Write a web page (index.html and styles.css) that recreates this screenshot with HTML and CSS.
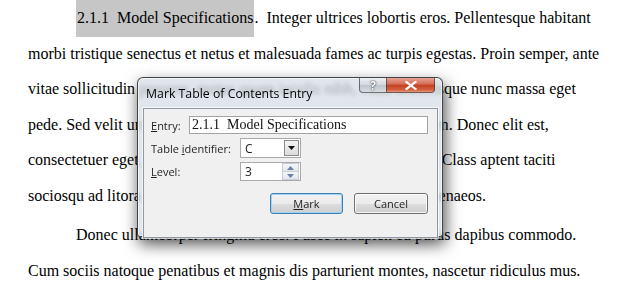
FILE: index.html
```html
<!DOCTYPE html>
<html lang="en">
<head>
  <meta charset="UTF-8">
  <title>Mark Table of Contents Entry</title>
  <link rel="stylesheet" href="styles.css">
</head>
<body>
  <div class="page">
    <p class="para indent"><span class="toc-mark">2.1.1&nbsp; Model Specifications</span>.&nbsp; Integer ultrices lobortis eros. Pellentesque habitant<br>
    morbi tristique senectus et netus et malesuada fames ac turpis egestas. Proin semper, ante<br>
    vitae sollicitudin posuere, metus quam iaculis nibh, vitae scelerisque nunc massa eget<br>
    pede. Sed velit urna, interdum vel, ultricies vel, faucibus at, quam. Donec elit est,<br>
    consectetuer eget, consequat quis, tempus quis, wisi. In in nunc. Class aptent taciti<br>
    sociosqu ad litora torquent per conubia nostra, per inceptos hymenaeos.</p>
    <p class="para indent second">Donec ullamcorper fringilla eros. Fusce in sapien eu purus dapibus commodo.<br>
    Cum sociis natoque penatibus et magnis dis parturient montes, nascetur ridiculus mus.</p>
  </div>

  <!-- Mark Table of Contents Entry dialog -->
  <div class="dialog">
    <div class="titlebar">
      <span class="title">Mark Table of Contents Entry</span>
      <div class="caption-buttons">
        <div class="cap-btn help">?</div>
        <div class="cap-btn close">
          <svg width="12" height="9" viewBox="0 0 12 9"><path d="M1.5 1 L10.5 8 M10.5 1 L1.5 8" stroke="#fff" stroke-width="2.2" stroke-linecap="square"/></svg>
        </div>
      </div>
    </div>

    <div class="panel">
      <div class="row">
        <label class="label entry-label"><u>E</u>ntry:</label>
        <div class="textbox">2.1.1&nbsp; Model Specifications</div>
      </div>
      <div class="row">
        <label class="label field-label">Table <u>i</u>dentifier:</label>
        <div class="combo">
          <span class="value">C</span>
          <span class="drop-btn">
            <svg width="7" height="4" viewBox="0 0 7 4"><path d="M0 0 H7 L3.5 4 Z" fill="#111"/></svg>
          </span>
        </div>
      </div>
      <div class="row">
        <label class="label field-label"><u>L</u>evel:</label>
        <div class="combo spin">
          <span class="value">3</span>
          <span class="spin-btns">
            <span class="spin-btn"><svg width="7" height="4" viewBox="0 0 7 4"><path d="M0 4 H7 L3.5 0 Z" fill="#6b7fa8"/></svg></span>
            <span class="spin-btn"><svg width="7" height="4" viewBox="0 0 7 4"><path d="M0 0 H7 L3.5 4 Z" fill="#6b7fa8"/></svg></span>
          </span>
        </div>
      </div>
      <div class="buttons">
        <button class="btn default"><u>M</u>ark</button>
        <button class="btn">Cancel</button>
      </div>
    </div>
  </div>
</body>
</html>
```

FILE: styles.css
```css
body {
  margin: 0;
  background-color: #fff;
  color: #000;
  font-family: 'Liberation Serif', 'Times New Roman', serif;
  overflow: hidden;
}

.page {
  padding: 0 0 0 28px;
}

.para {
  margin: 0;
  font-size: 16px;
  line-height: 35.5px;
}

.indent {
  text-indent: 48px;
}

.second {
  margin-top: 4px;
}

.toc-mark {
  background-color: #c6c6c6;
  padding: 12px 1px 11px 1px;
}

/* dialog */
.dialog {
  position: absolute;
  left: 137px;
  top: 77px;
  width: 304px;
  height: 158px;
  border: 1px solid rgba(40, 40, 40, 0.85);
  border-radius: 6px 6px 3px 3px;
  background-color: rgba(214, 222, 230, 0.76);
  -webkit-backdrop-filter: blur(2px);
  backdrop-filter: blur(2px);
  box-shadow: 2px 7px 16px rgba(0, 0, 0, 0.7), inset 0 0 0 1px rgba(255, 255, 255, 0.6);
  font-family: 'Open Sans', 'Noto Sans', sans-serif;
  font-size: 11px;
  color: #1e1e1e;
}

.titlebar {
  position: relative;
  height: 30px;
}

.title {
  position: absolute;
  left: 8px;
  top: 7px;
  font-size: 12.3px;
  color: #000;
}

.caption-buttons {
  position: absolute;
  top: 0;
  right: 7px;
  display: flex;
}

.cap-btn {
  height: 14px;
  display: flex;
  align-items: center;
  justify-content: center;
  border: 1px solid rgba(60, 60, 60, 0.7);
  border-top: none;
}

.help {
  width: 26px;
  border-right: none;
  border-radius: 0 0 0 4px;
  background: linear-gradient(#eef1f4, #d3d8de 50%, #bfc5cc 51%, #d8dde2);
  color: #fff;
  font-weight: bold;
  font-size: 12px;
  text-shadow: 0 0 2px #333, 0 0 1px #333;
}

.close {
  width: 47px;
  border-radius: 0 0 4px 0;
  background: linear-gradient(#e8a393, #d46b55 45%, #c2401f 50%, #d4603f 85%, #e89a7a);
}

.panel {
  margin: 0 4px 0 5px;
  height: 121px;
  border: 1px solid #8e98a3;
  background-color: #f0f0f0;
  box-shadow: 0 0 0 1px rgba(255, 255, 255, 0.7);
  padding: 7px 9px 0 7px;
}

.row {
  display: flex;
  align-items: center;
  margin-bottom: 4px;
}

.label {
  flex: none;
}

.entry-label {
  width: 38px;
}

.field-label {
  width: 89px;
}

.textbox {
  flex: 1;
  height: 16px;
  border: 1px solid #a3a3a3;
  background-color: #fff;
  padding-left: 2px;
  font-family: 'Liberation Serif', 'Times New Roman', serif;
  font-size: 14px;
  line-height: 16px;
  color: #111;
}

.combo {
  width: 59px;
  height: 18px;
  border: 1px solid #a9a9a9;
  background-color: #fff;
  display: flex;
  align-items: center;
  justify-content: space-between;
  font-size: 12px;
}

.combo .value {
  padding-left: 4px;
}

.drop-btn {
  width: 15px;
  height: 16px;
  margin-right: 1px;
  border: 1px solid #8b8b8b;
  box-sizing: border-box;
  background: linear-gradient(#f2f2f2, #dcdcdc);
  display: flex;
  align-items: center;
  justify-content: center;
}

.spin {
  height: 17px;
}

.spin-btns {
  display: flex;
  flex-direction: column;
  margin-right: 1px;
}

.spin-btn {
  width: 15px;
  height: 7px;
  border: 1px solid #c9ced6;
  border-bottom: none;
  background: linear-gradient(#f5f7fa, #e2e6ec);
  display: flex;
  align-items: center;
  justify-content: center;
}

.spin-btn + .spin-btn {
  border-bottom: 1px solid #c9ced6;
}

.buttons {
  display: flex;
  justify-content: flex-end;
  gap: 11px;
  margin-top: 12px;
}

.btn {
  width: 74px;
  height: 21px;
  padding: 0;
  font-family: 'Open Sans', 'Noto Sans', sans-serif;
  font-size: 11px;
  color: #1e1e1e;
  border: 1px solid #707070;
  border-radius: 3px;
  background: linear-gradient(#f2f2f2, #ebebeb 50%, #dddddd 51%, #cfcfcf);
  box-shadow: inset 0 0 0 1px rgba(255, 255, 255, 0.8);
}

.btn.default {
  width: 73px;
  border-color: #3c7fb1;
  box-shadow: inset 0 0 0 1px #9fd3f5;
}
```
